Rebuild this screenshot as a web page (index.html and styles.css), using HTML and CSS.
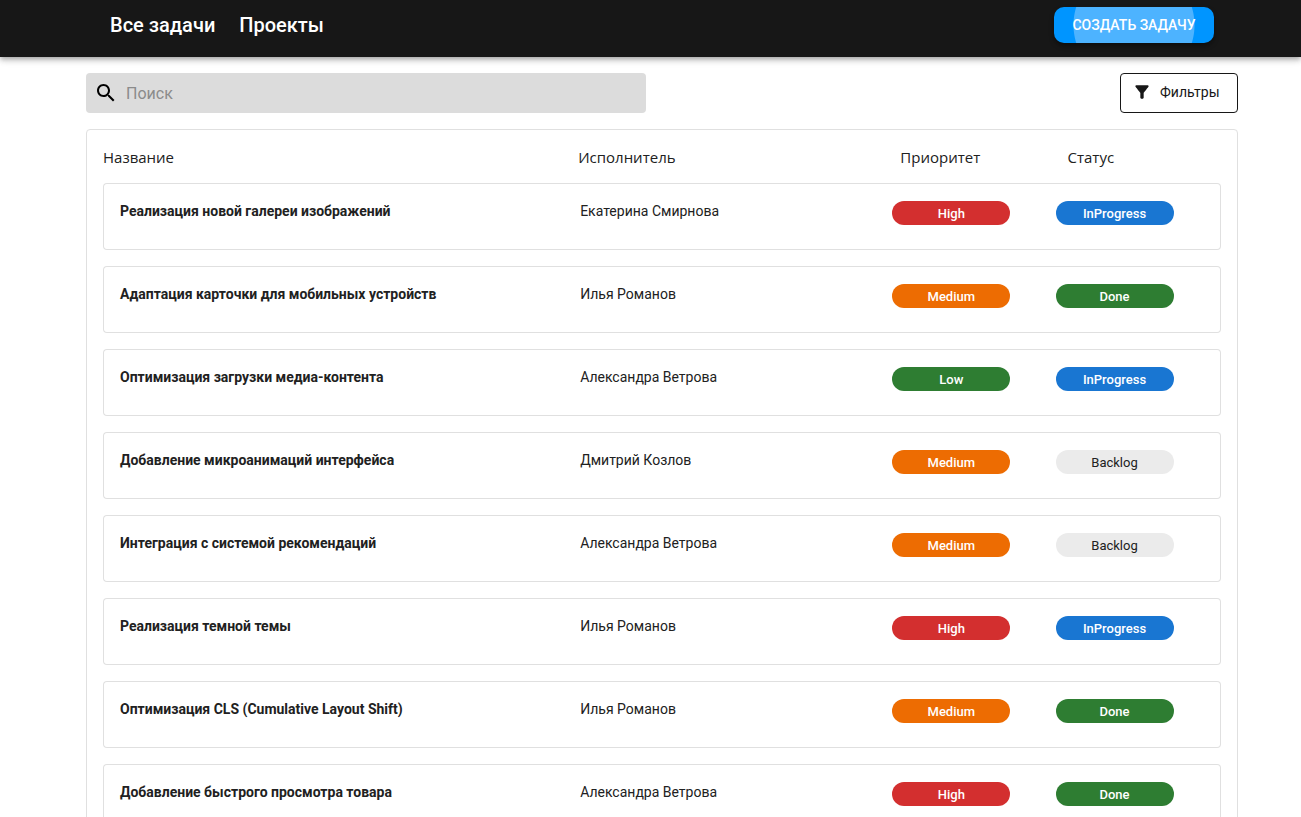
FILE: index.html
```html
<!DOCTYPE html>
<html lang="ru">
<head>
<meta charset="utf-8">
<meta name="viewport" content="width=device-width, initial-scale=1">
<title>Все задачи</title>
<link rel="stylesheet" href="styles.css">
</head>
<body>
<header class="topbar">
  <nav class="nav">
    <a class="nav-link" href="#tasks">Все задачи</a>
    <a class="nav-link" href="#projects">Проекты</a>
  </nav>
  <button class="create" type="button">Создать задачу</button>
</header>
<main class="page">
  <div class="toolbar">
    <label class="search">
      <svg class="search-icon" viewBox="0 0 24 24" role="img" aria-label="Поиск"><path d="M15.5 14h-.79l-.28-.27C15.41 12.59 16 11.11 16 9.5 16 5.91 13.09 3 9.5 3S3 5.91 3 9.5 5.91 16 9.5 16c1.61 0 3.09-.59 4.23-1.57l.27.28v.79l5 4.99L20.49 19zm-6 0C7.01 14 5 11.99 5 9.5S7.01 5 9.5 5 14 7.01 14 9.5 11.99 14 9.5 14"/></svg>
      <input class="search-input" type="text" placeholder="Поиск">
    </label>
    <button class="filters" type="button">
      <svg class="filters-icon" viewBox="0 0 24 24" aria-hidden="true"><path d="M4.25 5.61C6.27 8.2 10 13 10 13v6c0 .55.45 1 1 1h2c.55 0 1-.45 1-1v-6s3.72-4.8 5.74-7.39c.51-.66.04-1.61-.79-1.61H5.04c-.83 0-1.3.95-.79 1.61"/></svg>
      Фильтры
    </button>
  </div>
  <section class="panel" id="tasks">
    <table class="tasks">
      <thead>
        <tr><th class="col-name">Название</th><th class="col-person">Исполнитель</th><th class="col-priority">Приоритет</th><th class="col-status">Статус</th></tr>
      </thead>
      <tbody>
        <tr><td class="name">Реализация новой галереи изображений</td><td class="person">Екатерина Смирнова</td><td><span class="chip red">High</span></td><td><span class="chip blue">InProgress</span></td></tr>
        <tr><td class="name">Адаптация карточки для мобильных устройств</td><td class="person">Илья Романов</td><td><span class="chip orange">Medium</span></td><td><span class="chip green">Done</span></td></tr>
        <tr><td class="name">Оптимизация загрузки медиа-контента</td><td class="person">Александра Ветрова</td><td><span class="chip green">Low</span></td><td><span class="chip blue">InProgress</span></td></tr>
        <tr><td class="name">Добавление микроанимаций интерфейса</td><td class="person">Дмитрий Козлов</td><td><span class="chip orange">Medium</span></td><td><span class="chip gray">Backlog</span></td></tr>
        <tr><td class="name">Интеграция с системой рекомендаций</td><td class="person">Александра Ветрова</td><td><span class="chip orange">Medium</span></td><td><span class="chip gray">Backlog</span></td></tr>
        <tr><td class="name">Реализация темной темы</td><td class="person">Илья Романов</td><td><span class="chip red">High</span></td><td><span class="chip blue">InProgress</span></td></tr>
        <tr><td class="name">Оптимизация CLS (Cumulative Layout Shift)</td><td class="person">Илья Романов</td><td><span class="chip orange">Medium</span></td><td><span class="chip green">Done</span></td></tr>
        <tr><td class="name">Добавление быстрого просмотра товара</td><td class="person">Александра Ветрова</td><td><span class="chip red">High</span></td><td><span class="chip green">Done</span></td></tr>
      </tbody>
    </table>
  </section>
</main>
</body>
</html>
```
FILE: styles.css
```css
* { box-sizing: border-box; }

body {
  margin: 0;
  background: #fff;
  color: #212121;
  font-family: Roboto, sans-serif;
  font-size: 14px;
}

.topbar {
  display: flex;
  align-items: flex-start;
  justify-content: space-between;
  padding: 7px 87px 14px 110px;
  background: #171717;
  box-shadow: 0 2px 4px -1px rgba(0, 0, 0, .2), 0 4px 5px rgba(0, 0, 0, .14), 0 1px 10px rgba(0, 0, 0, .12);
}

.nav { display: flex; gap: 24px; }

.nav-link {
  color: #fff;
  font-size: 20px;
  font-weight: 500;
  line-height: 36px;
  text-decoration: none;
}

.create {
  min-width: 160px;
  height: 36px;
  padding: 0 16px;
  border: 0;
  border-radius: 10px;
  background: radial-gradient(circle at 50% 50%, #4db3ff 60px, #0095ff 61px);
  box-shadow: 0 3px 5px rgba(0, 0, 0, .4);
  color: #fff;
  font: 500 14px/24px Roboto, sans-serif;
  text-transform: uppercase;
}

.page { padding: 16px 63px 16px 86px; }

.toolbar {
  display: flex;
  justify-content: space-between;
  margin-bottom: 16px;
}

.search {
  display: flex;
  align-items: center;
  gap: 8px;
  width: 560px;
  height: 40px;
  padding: 0 8px;
  border-radius: 4px;
  background: #dcdcdc;
}

.search-icon { width: 24px; height: 24px; fill: #000; }

.search-input {
  flex: 1;
  border: 0;
  outline: 0;
  padding: 2px 0 0;
  background: transparent;
  font: 16px/24px Roboto, sans-serif;
}

.search-input::placeholder { color: #8b8b8b; }

.filters {
  display: flex;
  align-items: center;
  gap: 8px;
  min-width: 118px;
  height: 40px;
  padding: 0 15px 2px 11px;
  border: 1px solid #171717;
  border-radius: 4px;
  background: #fff;
  color: #171717;
  font: 14px/24px Roboto, sans-serif;
}

.filters-icon { width: 20px; height: 20px; fill: #171717; }

.panel {
  padding: 0 16px;
  border: 1px solid #e0e0e0;
  border-radius: 4px;
}

.tasks {
  width: 100%;
  table-layout: fixed;
  border-collapse: separate;
  border-spacing: 0 16px;
}

.tasks th {
  padding: 2px 0 0;
  font: 15px/19px "Open Sans", sans-serif;
  text-align: left;
}

.col-name { width: 42.5%; }
.col-person { width: 28.1%; }
.col-priority { width: 14.6%; }
.tasks .col-priority { padding-left: 8px; }
.tasks .col-status { padding-left: 12px; }

.tasks td {
  height: 67px;
  padding: 17px 0 24px;
  border: solid #e0e0e0;
  border-width: 1px 0;
  vertical-align: top;
  line-height: 20px;
}

.tasks td:first-child { border-left-width: 1px; border-radius: 4px 0 0 4px; }
.tasks td:last-child { border-right-width: 1px; border-radius: 0 4px 4px 0; }
.tasks .name { padding-left: 16px; font-weight: 700; }
.tasks .person { padding-left: 2px; }

.chip {
  display: block;
  width: 118px;
  height: 24px;
  border-radius: 12px;
  color: #fff;
  font-size: 13px;
  font-weight: 500;
  line-height: 26px;
  text-align: center;
}

.red { background: #d32f2f; }
.blue { background: #1976d2; }
.orange { background: #ed6c02; }
.green { background: #2e7d32; }
.gray { background: #ebebeb; color: #212121; font-weight: 400; }
```
